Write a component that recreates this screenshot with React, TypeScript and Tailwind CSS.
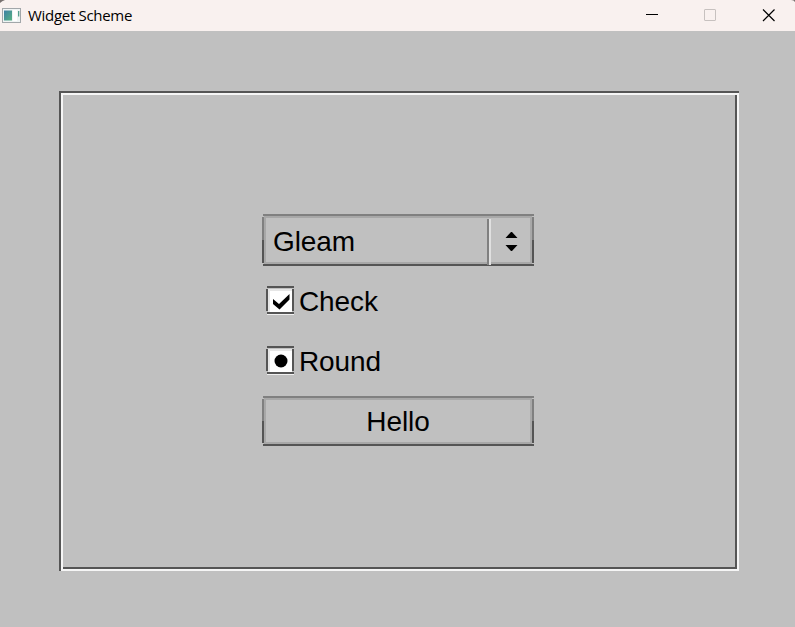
import React from "react";

function ButtonBevel() {
  return (
    <span aria-hidden="true" className="pointer-events-none absolute inset-0">
      <span className="absolute inset-0.5 border-2 border-[#a8a8a8]" />
      <span className="absolute top-0 right-0 left-px h-0.5 bg-[#808080]" />
      <span className="absolute right-0 bottom-0 left-px h-0.5 bg-[#555555]" />
      <span className="absolute top-[3px] bottom-[3px] left-0 w-0.5 bg-linear-to-b from-[#808080] from-50% to-[#555555] to-50%" />
      <span className="absolute top-[3px] right-0 bottom-[3px] w-0.5 bg-linear-to-b from-[#808080] from-50% to-[#555555] to-50%" />
    </span>
  );
}

function Indicator({ children }: { children: React.ReactNode }) {
  return (
    <span className="relative flex h-[30px] w-7 shrink-0">
      <span className="absolute top-[3px] right-0.5 bottom-0.5 left-[3px] bg-white" />
      <span className="absolute top-[3px] right-0.5 bottom-1 left-0.5 border-t-2 border-l-2 border-[#e6e6e6]" />
      <span className="absolute top-[28px] right-0 left-px h-px bg-[#f0f0f0]" />
      <span className="absolute top-0 right-0 left-px h-0.5 bg-[#555555]" />
      <span className="absolute top-[26px] right-0 left-px h-0.5 bg-[#555555]" />
      <span className="absolute top-[3px] left-0 h-[22px] w-0.5 bg-[#555555]" />
      <span className="absolute top-[3px] right-0 h-[22px] w-0.5 bg-[#555555]" />
      <svg viewBox="0 0 28 30" className="relative h-[30px] w-7">{children}</svg>
    </span>
  );
}

function TitleBar() {
  return (
    <header className="relative flex h-[31px] items-center bg-[#f9f1ef]">
      <svg viewBox="0 0 5 4" className="absolute top-0 left-0 h-1 w-[5px]">
        <path d="M0 0h5Q2 1 0 3z" fill="#77706f" />
      </svg>
      <svg viewBox="0 0 5 4" className="absolute top-0 right-0 h-1 w-[5px]">
        <path d="M5 0H1Q4 0 5 2z" fill="#77706f" />
      </svg>
      <svg viewBox="0 0 19 15" className="ml-[2px] h-[15px] w-[19px]">
        <defs>
          <linearGradient id="pane" x1="0" y1="0" x2="1" y2="1">
            <stop offset="0" stopColor="#3d7fa5" />
            <stop offset="1" stopColor="#58b283" />
          </linearGradient>
        </defs>
        <rect x=".5" y=".5" width="18" height="14" fill="#f0f4f4" stroke="#a2a7aa" />
        <rect x="2" y="2.500" width="8" height="10" fill="url(#pane)" />
        <rect x="11" y="2" width="4" height="11" fill="#fff" />
        <rect x="16" y="3" width="1.300" height="5.500" fill="#58a08f" />
      </svg>
      <span className="ml-[7px] flex-1 pb-0.5 font-['Open_Sans',sans-serif] text-[15px] leading-7 tracking-[-0.3px] text-black">
        Widget Scheme
      </span>
      <svg viewBox="0 0 160 31" className="h-[31px] w-40" fill="none">
        <path d="M11 14.5h12" stroke="#000" />
        <rect x="69.5" y="9.5" width="11" height="11" rx=".5" stroke="#c7c1bf" />
        <path d="M128 9.500L139.500 21M139.500 9.500L128 21" stroke="#000" strokeWidth="1.2" />
      </svg>
    </header>
  );
}

export default function App() {
  return (
    <div className="flex h-[627px] w-[795px] flex-col overflow-hidden bg-[#c0c0c0] font-['Liberation_Sans',Arial,sans-serif] text-[28px] leading-8 tracking-[-0.1px] text-black">
      <TitleBar />
      <main className="mt-[60px] ml-[59px] h-[480px] w-[680px] p-0.5 shadow-[inset_0_2px_#555555,inset_2px_0_#555555,inset_0_-2px_#f5f5f5,inset_-2px_0_#f5f5f5]">
        <div className="flex h-full flex-col pt-[121px] pl-[201px] shadow-[inset_0_2px_#f5f5f5,inset_2px_0_#f5f5f5,inset_0_-2px_#555555,inset_-2px_0_#555555]">
          <button className="relative flex h-[52px] w-[272px] text-left">
            <ButtonBevel />
            <span className="flex-1 pt-3 pl-[11px]">Gleam</span>
            <span className="relative mt-[5px] flex h-[46px] w-[47px] border-l-2 border-[#808080]">
              <span className="w-0.5 bg-[#e0e0e0]" />
              <svg viewBox="0 0 43 46" className="h-[46px] w-[43px]">
                <path d="M14.500 19l5.500-6h1l5.500 6zM14.500 26h12l-5.500 6h-1z" />
              </svg>
            </span>
          </button>
          <label className="mt-5 ml-1 flex h-[30px]">
            <Indicator>
              <path d="M7 13L13 18L23.500 8V13.500L13.500 23.500L7 18Z" />
            </Indicator>
            <span className="ml-[5px]">Check</span>
          </label>
          <label className="mt-[30px] ml-1 flex h-[30px]">
            <Indicator>
              <circle cx="15" cy="15" r="6.500" />
            </Indicator>
            <span className="ml-[5px]">Round</span>
          </label>
          <button className="relative mt-5 h-[50px] w-[272px] pt-px">
            <ButtonBevel />
            Hello
          </button>
        </div>
      </main>
    </div>
  );
}
